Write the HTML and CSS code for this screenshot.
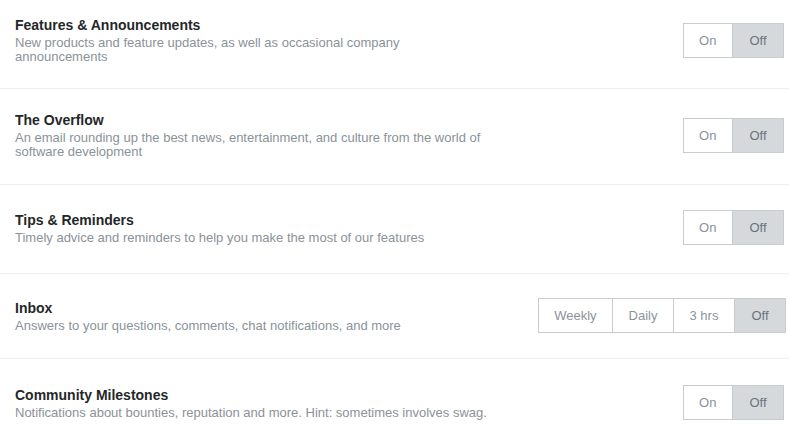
FILE: index.html
```html
<!DOCTYPE html>
<html>
<head>
<meta charset="utf-8">
<link rel="stylesheet" href="styles.css">
</head>
<body>
<div class="list">
  <div class="row row-1">
    <div class="info">
      <div class="title">Features &amp; Announcements</div>
      <div class="desc">New products and feature updates, as well as occasional company announcements</div>
    </div>
    <div class="group group-onoff">
      <span class="seg">On</span><span class="seg seg-off is-selected">Off</span>
    </div>
  </div>
  <div class="row row-2">
    <div class="info">
      <div class="title">The Overflow</div>
      <div class="desc">An email rounding up the best news, entertainment, and culture from the world of software development</div>
    </div>
    <div class="group group-onoff">
      <span class="seg">On</span><span class="seg seg-off is-selected">Off</span>
    </div>
  </div>
  <div class="row row-3">
    <div class="info">
      <div class="title">Tips &amp; Reminders</div>
      <div class="desc">Timely advice and reminders to help you make the most of our features</div>
    </div>
    <div class="group group-onoff">
      <span class="seg">On</span><span class="seg seg-off is-selected">Off</span>
    </div>
  </div>
  <div class="row row-4">
    <div class="info">
      <div class="title">Inbox</div>
      <div class="desc">Answers to your questions, comments, chat notifications, and more</div>
    </div>
    <div class="group">
      <span class="seg">Weekly</span><span class="seg">Daily</span><span class="seg">3 hrs</span><span class="seg seg-off is-selected">Off</span>
    </div>
  </div>
  <div class="row row-5">
    <div class="info">
      <div class="title">Community Milestones</div>
      <div class="desc">Notifications about bounties, reputation and more. Hint: sometimes involves swag.</div>
    </div>
    <div class="group group-onoff">
      <span class="seg">On</span><span class="seg seg-off is-selected">Off</span>
    </div>
  </div>
</div>
</body>
</html>
```
FILE: styles.css
```css
html, body {
  margin: 0;
  padding: 0;
  background: #ffffff;
}
body {
  font-family: "Liberation Sans", Arial, sans-serif;
}
.list {
  display: flex;
  flex-direction: column;
}
.row {
  display: flex;
  align-items: center;
  justify-content: space-between;
  padding-left: 15px;
  padding-right: 3px;
  border-bottom: 1px solid #eceeef;
}
.row-1 { padding-top: 16px; padding-bottom: 24px; }
.row-2 { padding-top: 22px; padding-bottom: 25px; }
.row-3 { padding-top: 25px; padding-bottom: 28px; }
.row-4 { padding-top: 24px; padding-bottom: 25px; }
.row-5 { padding-top: 26px; padding-bottom: 26px; border-bottom: none; }
.info {
  display: flex;
  flex-direction: column;
  max-width: 475px;
}
.title {
  font-size: 14px;
  line-height: 18px;
  font-weight: bold;
  color: #242729;
  margin-bottom: 2px;
}
.desc {
  font-size: 13px;
  line-height: 14px;
  color: #8a929a;
}
.group {
  display: flex;
  flex-shrink: 0;
}
.group-onoff {
  margin-right: 2px;
}
.seg {
  display: flex;
  align-items: center;
  height: 35px;
  box-sizing: border-box;
  padding: 0 15.5px;
  border: 1px solid #c8ccd0;
  border-left-width: 0;
  font-size: 13px;
  color: #8a939c;
  background: #ffffff;
}
.seg:first-child {
  border-left-width: 1px;
}
.seg-off {
  padding: 0 16.5px;
}
.is-selected {
  background: #d6d9dc;
  color: #6a737c;
}
```
